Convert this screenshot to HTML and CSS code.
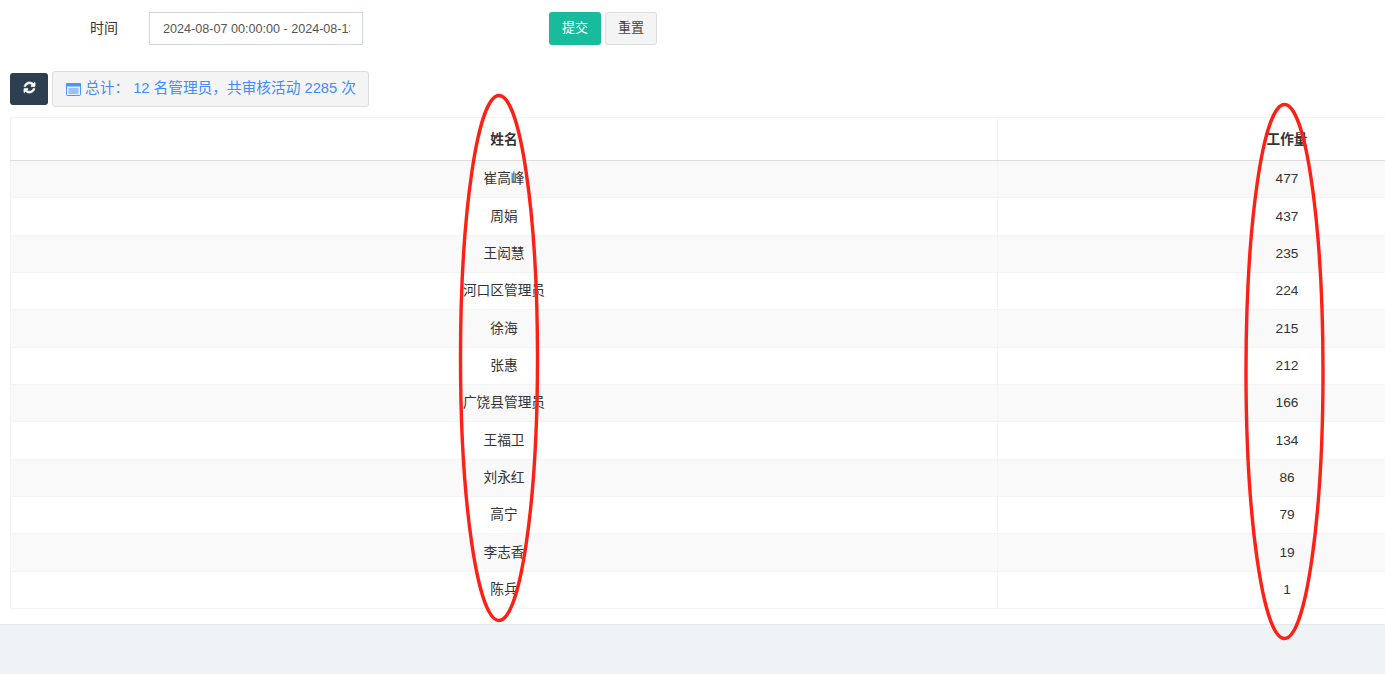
FILE: index.html
```html
<!DOCTYPE html>
<html lang="zh-CN">
<head>
<meta charset="utf-8">
<title>工作量统计</title>
<link rel="stylesheet" href="styles.css">
</head>
<body>
<main class="panel">
  <form class="filter">
    <label class="filter-label" for="range">时间</label>
    <input class="filter-input" id="range" type="text" value="2024-08-07 00:00:00 - 2024-08-13 23:59:59">
    <div class="filter-actions">
      <button class="btn btn-submit" type="button">提交</button>
      <button class="btn btn-reset" type="button">重置</button>
    </div>
  </form>
  <div class="toolbar">
    <button class="btn-refresh" type="button" aria-label="刷新">
      <svg class="icon-refresh" viewBox="0 0 1792 1792"><path fill="#fff" stroke="#fff" stroke-width="90" d="M1639 1056q0 5-1 7-64 268-268 434.5t-478 166.5q-146 0-282.5-55t-243.5-157l-129 129q-19 19-45 19t-45-19-19-45v-448q0-26 19-45t45-19h448q26 0 45 19t19 45-19 45l-137 137q71 66 161 102t187 36q134 0 250-65t186-179q11-17 53-117 8-23 30-23h192q13 0 22.5 9.5t9.5 22.5zm25-800v448q0 26-19 45t-45 19h-448q-26 0-45-19t-19-45 19-45l138-138q-148-137-349-137-134 0-250 65t-186 179q-11 17-53 117-8 23-30 23h-199q-13 0-22.5-9.5t-9.5-22.5v-7q65-268 270-434.5t480-166.5q146 0 284 55.5t245 156.5l130-129q19-19 45-19t45 19 19 45z"/></svg>
    </button>
    <div class="summary">
      <svg class="icon-list" viewBox="0 0 15 13"><rect x="0.5" y="0.5" width="14" height="12" rx="1" fill="#e8f0ff" stroke="#4d94ff"/><rect x="0" y="0" width="15" height="3.5" rx="1" fill="#4d94ff"/><path d="M2.5 6h10M2.5 8h10M2.5 10h10" stroke="#4d94ff" stroke-width="1"/></svg>
      <span>总计： 12 名管理员，共审核活动 2285 次</span>
    </div>
  </div>
  <table class="data">
    <thead>
      <tr><th>姓名</th><th>工作量</th></tr>
    </thead>
    <tbody>
      <tr><td>崔高峰</td><td>477</td></tr>
      <tr><td>周娟</td><td>437</td></tr>
      <tr><td>王闳慧</td><td>235</td></tr>
      <tr><td>河口区管理员</td><td>224</td></tr>
      <tr><td>徐海</td><td>215</td></tr>
      <tr><td>张惠</td><td>212</td></tr>
      <tr><td>广饶县管理员</td><td>166</td></tr>
      <tr><td>王福卫</td><td>134</td></tr>
      <tr><td>刘永红</td><td>86</td></tr>
      <tr><td>高宁</td><td>79</td></tr>
      <tr><td>李志香</td><td>19</td></tr>
      <tr><td>陈兵</td><td>1</td></tr>
    </tbody>
  </table>
</main>
<svg class="marks" width="1385" height="674" viewBox="0 0 1385 674" aria-hidden="true">
  <ellipse cx="499" cy="358" rx="38.5" ry="262.5"/>
  <ellipse cx="1284.5" cy="371.5" rx="38.5" ry="267"/>
</svg>
</body>
</html>
```
FILE: styles.css
```css
html, body {
  margin: 0;
  height: 100%;
  overflow: hidden;
}
body {
  position: relative;
  background: #f0f3f6;
  color: #333;
  font: 14px/1.43 "Liberation Sans", "Noto Sans CJK SC", sans-serif;
}
.panel {
  box-sizing: border-box;
  height: 625px;
  width: 1600px;
  padding: 12px 10px 0;
  background: #fff;
  border-bottom: 1px solid #e4e8ec;
}
.filter {
  display: flex;
  height: 33px;
  align-items: center;
}
.filter-label {
  box-sizing: border-box;
  width: 139px;
  padding-left: 80px;
}
.filter-input {
  box-sizing: border-box;
  width: 214px;
  height: 33px;
  padding: 6px 12px 6px 13px;
  border: 1px solid #d2d6e0;
  border-radius: 0;
  outline: 0;
  color: #555;
  font: 12.6px "Liberation Sans", sans-serif;
}
.filter-actions {
  display: flex;
  gap: 4px;
  margin-left: 186px;
}
.btn {
  box-sizing: border-box;
  width: 52px;
  height: 33px;
  padding: 0 0 4px;
  border: 1px solid transparent;
  border-radius: 3px;
  font: 13px "Liberation Sans", "Noto Sans CJK SC", sans-serif;
}
.btn-submit {
  background: #18bc9c;
  color: #fff;
}
.btn-reset {
  background: #f4f4f4;
  border-color: #ddd;
  color: #444;
}
.toolbar {
  display: flex;
  align-items: center;
  gap: 4px;
  margin-top: 26px;
}
.btn-refresh {
  display: flex;
  align-items: center;
  justify-content: center;
  width: 38px;
  height: 32px;
  padding: 0 0 3px 1px;
  border: 0;
  border-radius: 3px;
  background: #2c3e50;
}
.icon-refresh {
  width: 13px;
  height: 13px;
}
.summary {
  box-sizing: border-box;
  display: flex;
  align-items: center;
  gap: 4px;
  width: 317px;
  height: 36px;
  padding-left: 13px;
  background: #f4f4f4;
  border: 1px solid #ddd;
  border-radius: 3px;
  color: #3f8cff;
  font-size: 14.7px;
  white-space: nowrap;
}
.icon-list {
  width: 15px;
  height: 13px;
  flex: none;
}
.data {
  table-layout: fixed;
  width: 1567px;
  margin-top: 10px;
  border-collapse: collapse;
  background: #fff;
  border: 1px solid #f4f4f4;
  font-size: 13.7px;
}
.data th,
.data td {
  padding: 0;
  border: 1px solid #f4f4f4;
  text-align: center;
  vertical-align: middle;
}
.data th {
  padding-top: 1px;
}
.data th:first-child,
.data td:first-child {
  width: 986px;
}
.data thead tr {
  height: 43px;
}
.data th {
  border-bottom: 1px solid #ddd;
  font-weight: bold;
}
.data tbody tr {
  height: 37.33px;
}
.data tbody tr:nth-child(odd) {
  background: #f9f9f9;
}
.marks {
  position: absolute;
  left: 0;
  top: 0;
  pointer-events: none;
}
.marks ellipse {
  fill: none;
  stroke: #ff2015;
  stroke-width: 3.4;
}
```
